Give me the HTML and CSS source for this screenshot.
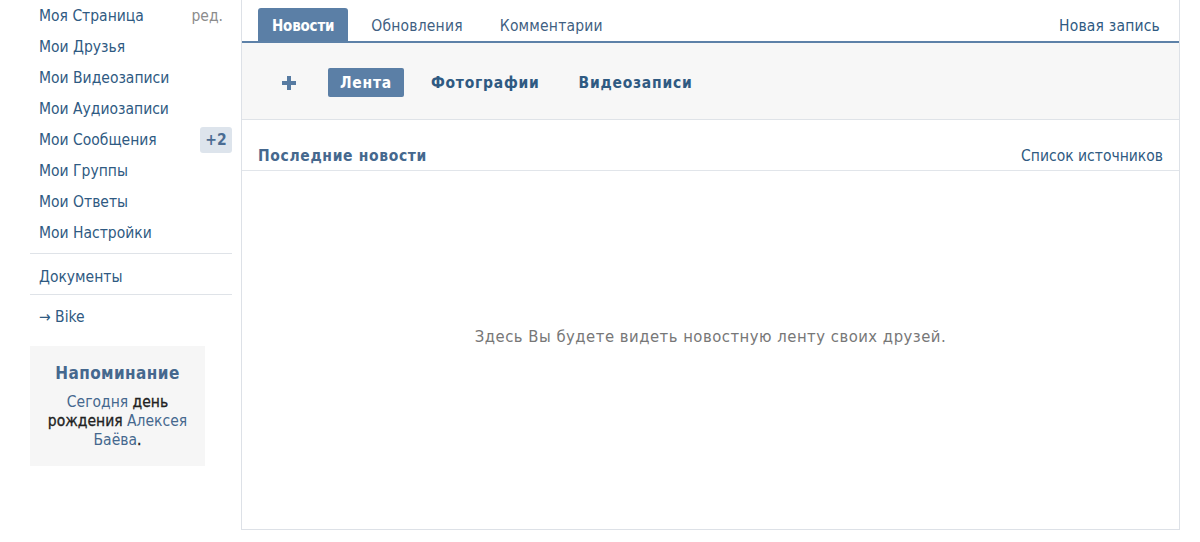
FILE: index.html
```html
<!DOCTYPE html>
<html lang="ru">
<head>
<meta charset="utf-8">
<title>Новости</title>
<link rel="stylesheet" href="styles.css">
</head>
<body>
<div class="page">
  <aside class="side">
    <ul class="menu">
      <li class="item"><a>Моя Страница</a><span class="edit">ред.</span></li>
      <li class="item"><a>Мои Друзья</a></li>
      <li class="item"><a>Мои Видеозаписи</a></li>
      <li class="item"><a>Мои Аудиозаписи</a></li>
      <li class="item"><a>Мои Сообщения</a><span class="badge">+2</span></li>
      <li class="item"><a>Мои Группы</a></li>
      <li class="item"><a>Мои Ответы</a></li>
      <li class="item"><a>Мои Настройки</a></li>
    </ul>
    <div class="divider d1"></div>
    <div class="item"><a>Документы</a></div>
    <div class="divider d2"></div>
    <div class="item"><a>→ Bike</a></div>
    <div class="remind">
      <div class="remind-title">Напоминание</div>
      <div class="remind-text"><a>Сегодня</a> <b>день</b><br><b>рождения</b> <a>Алексея</a><br><a>Баёва</a><b>.</b></div>
    </div>
  </aside>
  <main class="panel">
    <div class="tabs">
      <span class="tab active">Новости</span>
      <span class="tab">Обновления</span>
      <span class="tab">Комментарии</span>
      <span class="spacer"></span>
      <span class="new-post">Новая запись</span>
    </div>
    <div class="filters">
      <span class="plus">
        <svg width="16" height="16" viewBox="0 0 16 16"><path d="M6 1h4v5h5v4h-5v5H6v-5H1V6h5z" fill="#577ba2"/></svg>
      </span>
      <span class="filter on">Лента</span>
      <span class="filter">Фотографии</span>
      <span class="filter">Видеозаписи</span>
    </div>
    <div class="feed-head">
      <span class="feed-title">Последние новости</span>
      <span class="sources">Список источников</span>
    </div>
    <div class="empty">Здесь Вы будете видеть новостную ленту своих друзей.</div>
  </main>
</div>
</body>
</html>
```
FILE: styles.css
```css
* { box-sizing: border-box; }
html, body { margin: 0; padding: 0; background: #fff; }
body {
  font-family: "DejaVu Sans Condensed", "DejaVu Sans", sans-serif;
  font-size: 15.5px;
  color: #000;
}
a { color: #2f5a82; text-decoration: none; }
.page {
  display: flex;
  align-items: flex-start;
  padding-left: 30px;
}
.side {
  width: 202px;
  flex: none;
}
.menu { list-style: none; margin: 0; padding: 0; }
.item {
  height: 31px;
  display: flex;
  align-items: center;
  justify-content: space-between;
  padding-left: 9px;
  padding-right: 9px;
}
.edit { color: #8c8c8c; }
.badge {
  background: #dde4ec;
  color: #4a6c93;
  font-weight: bold;
  border-radius: 3px;
  height: 26px;
  width: 32px;
  margin-right: -9px;
  display: flex;
  align-items: center;
  justify-content: center;
}
.divider { height: 1px; background: #dfe3e8; }
.d1 { margin: 5px 0 7px; }
.d2 { margin: 2px 0 6px; }
.remind {
  margin-top: 14px;
  width: 175px;
  height: 120px;
  background: #f6f6f6;
  text-align: center;
  padding: 16px 6px 0;
}
.remind-title {
  font-weight: bold;
  font-size: 17px;
  letter-spacing: 0.4px;
  color: #45688e;
  line-height: 22px;
}
.remind-text {
  margin-top: 9px;
  line-height: 19px;
}
.remind-text a { color: #45688e; }
.remind-text b { color: #222; font-weight: normal; -webkit-text-stroke: 0.3px #222; }

.panel {
  margin-left: 9px;
  width: 939px;
  height: 530px;
  border: 1px solid #dde1e7;
  border-top: none;
  flex: none;
}
.tabs {
  display: flex;
  align-items: flex-end;
  height: 43px;
  padding: 0 19px 0 16px;
  border-bottom: 2px solid #5d81a8;
}
.tab {
  height: 33px;
  display: flex;
  align-items: center;
  padding: 2px 14px 0;
  margin-right: 9px;
  color: #3f5f82;
  letter-spacing: 0.2px;
}
.tab.active {
  background: #5b7fa6;
  color: #fff;
  font-weight: bold;
  font-size: 15px;
  letter-spacing: -0.2px;
  border-radius: 3px 3px 0 0;
}
.spacer { flex: 1; }
.new-post {
  height: 33px;
  display: flex;
  align-items: center;
  padding-top: 2px;
  color: #2f5a82;
  letter-spacing: 0.2px;
}
.filters {
  height: 77px;
  background: #f7f7f7;
  border-bottom: 1px solid #dfe3e8;
  display: flex;
  align-items: center;
  padding-left: 39px;
  padding-top: 3px;
}
.plus { display: flex; width: 47px; }
.filter {
  height: 29px;
  display: flex;
  align-items: center;
  padding: 1px 12px 0;
  margin-right: 15px;
  font-weight: bold;
  letter-spacing: 0.75px;
  color: #2f5a82;
  border-radius: 2px;
}
.filter.on {
  background: #5b7fa6;
  color: #fff;
}
.feed-head {
  display: flex;
  justify-content: space-between;
  align-items: center;
  height: 51px;
  padding: 22px 16px 0;
  border-bottom: 1px solid #e1e5ea;
}
.feed-title { font-weight: bold; color: #45688e; letter-spacing: 0.65px; }
.sources { color: #2f5a82; }
.empty {
  text-align: center;
  color: #777;
  font-size: 16.5px;
  letter-spacing: 0.5px;
  margin-top: 156px;
}
```
